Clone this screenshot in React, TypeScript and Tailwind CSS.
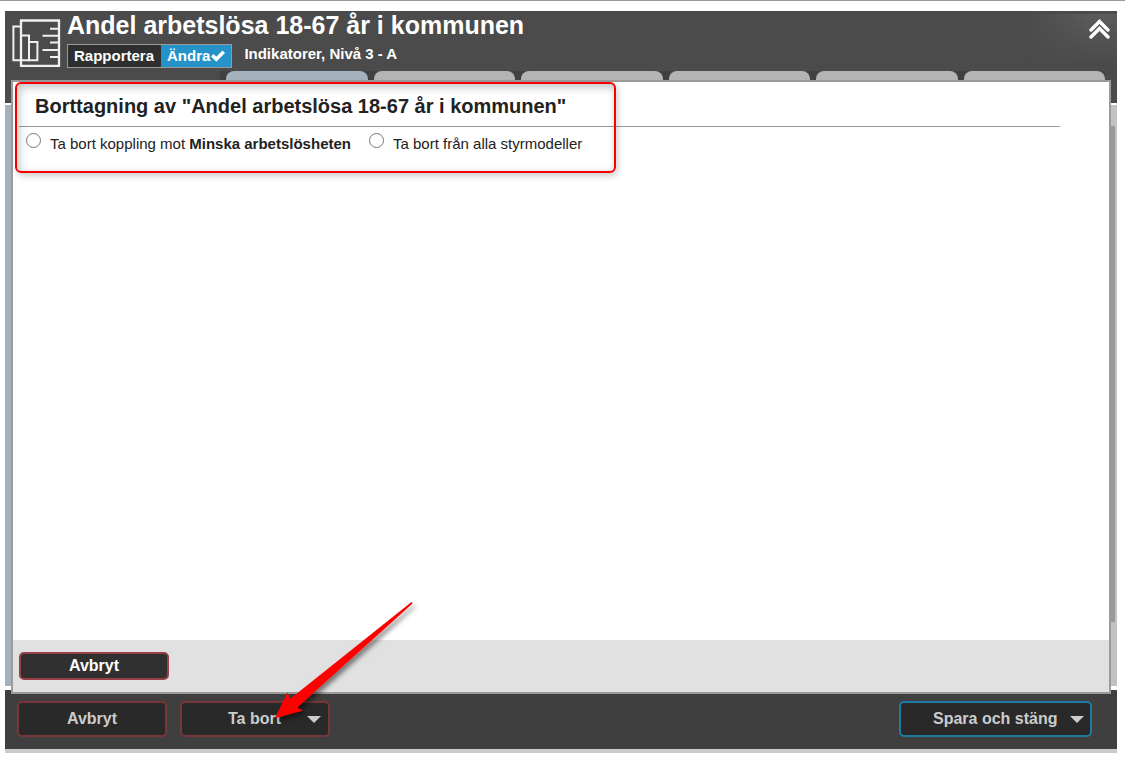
import { useState } from "react";

const tabs = [
  { id: "tab-1", active: true },
  { id: "tab-2", active: false },
  { id: "tab-3", active: false },
  { id: "tab-4", active: false },
  { id: "tab-5", active: false },
  { id: "tab-6", active: false },
];

function IndicatorIcon() {
  return (
    <svg width="49" height="49" viewBox="0 0 49 49" fill="none" stroke="#f0f0f0" strokeWidth="2" aria-hidden="true">
      <path d="M9 7.5H1.4v33.7H9" />
      <path d="M9 1.5h38v45.3H9z" strokeWidth="2.3" />
      <path d="M9 16.5h8v24.7H9" />
      <path d="M17 22.9h8.4v18.3H17z" />
      <path d="M38 9.7h8.5M30.5 16.7h16M38 23.6h8.5M30.5 31h16M38 38h8.5" />
    </svg>
  );
}

function CheckIcon() {
  return (
    <svg width="14" height="12" viewBox="0 0 14 12" fill="none" stroke="#fff" strokeWidth="3.6" aria-hidden="true">
      <path d="M1.3 5.2l4 4L12.8 1.7" />
    </svg>
  );
}

function DoubleChevronUp() {
  return (
    <svg width="21" height="20" viewBox="0 0 21 20" fill="none" stroke="#fff" strokeWidth="3.4" strokeLinecap="round" aria-hidden="true">
      <path d="M2 11l8.5-8.5L19 11" />
      <path d="M2 18l8.5-8.5L19 18" />
    </svg>
  );
}

function CaretDown() {
  return (
    <svg width="14" height="7" viewBox="0 0 14 7" fill="#ccc" aria-hidden="true">
      <path d="M0 0h14L7 7z" />
    </svg>
  );
}

function PointerArrow() {
  return (
    <svg
      className="pointer-events-none absolute bottom-2 left-[90px] z-20"
      width="155"
      height="135"
      viewBox="270 594 155 135"
      aria-hidden="true"
    >
      <defs>
        <filter id="arrow-shadow" x="-10%" y="-10%" width="130%" height="130%">
          <feDropShadow dx="3" dy="3" stdDeviation="2.5" floodColor="#000" floodOpacity="0.5" />
        </filter>
      </defs>
      <path
        d="M275 718.3L287.5 692.3L290 699L411.5 602L412.5 603.5L297 707.7L303 710.5Z"
        fill="#ff0000"
        filter="url(#arrow-shadow)"
      />
    </svg>
  );
}

function Header() {
  return (
    <header className="flex h-[92px] flex-col bg-[#4b4b4b] text-white">
      <div className="flex h-[60px] shrink-0">
        <div className="pl-[7px] pt-2">
          <IndicatorIcon />
        </div>
        <div className="flex-1 pl-1.5">
          <h1 className="text-[25px] font-bold leading-7">Andel arbetslösa 18-67 år i kommunen</h1>
          <div className="mt-[5px] flex h-6">
            <div className="flex border border-[#999] text-[15px] font-bold">
              <button type="button" className="bg-[#2f2f2f] pl-1.5 pr-[7px]">
                Rapportera
              </button>
              <button type="button" className="flex items-center gap-px bg-[#2593c9] px-1.5">
                Ändra
                <CheckIcon />
              </button>
            </div>
            <p className="pl-3 text-[15px] font-bold leading-5">Indikatorer, Nivå 3 - A</p>
          </div>
        </div>
        <button
          type="button"
          aria-label="Fäll ihop"
          className="mt-[3px] flex h-[52px] w-24 justify-end bg-linear-to-b from-[#5b5b5b] to-[#4a4a4a] mask-l-from-30% pr-[7px] pt-[5px]"
        >
          <DoubleChevronUp />
        </button>
      </div>
      <nav className="ml-[215px] mr-3 grid flex-1 grid-cols-6 gap-1.5 bg-[#404040] pl-1.5">
        {tabs.map((tab) => (
          <div key={tab.id} className={tab.active ? "rounded-t-lg bg-[#a3b2bc]" : "rounded-t-lg bg-[#b4b4b4]"} />
        ))}
      </nav>
    </header>
  );
}

function RemoveDialog({ choice, onChoice }: { choice: string; onChoice: (value: string) => void }) {
  return (
    <section
      role="dialog"
      aria-labelledby="remove-title"
      className="absolute bottom-[59px] left-1.5 right-1.5 top-[69px] z-10 flex flex-col border-2 border-[#9b9b9b] bg-white text-[#222]"
    >
      <div className="flex-1 pl-1.5">
        <h2
          id="remove-title"
          className="mr-[49px] h-[45px] border-b border-[#999] pl-4 pt-2.5 text-[20px] font-bold leading-7"
        >
          Borttagning av "Andel arbetslösa 18-67 år i kommunen"
        </h2>
        <div className="flex pl-[7px] pt-1.5 text-[15px] leading-5">
          <label className="flex w-[343px] gap-[9px]">
            <input
              type="radio"
              name="scope"
              className="size-[15px]"
              checked={choice === "link"}
              onChange={() => onChoice("link")}
            />
            <span className="pt-px">
              Ta bort koppling mot <b>Minska arbetslösheten</b>
            </span>
          </label>
          <label className="flex gap-[9px]">
            <input
              type="radio"
              name="scope"
              className="size-[15px]"
              checked={choice === "all"}
              onChange={() => onChoice("all")}
            />
            <span className="pt-px">Ta bort från alla styrmodeller</span>
          </label>
        </div>
      </div>
      <div className="h-[52px] bg-[#e1e1e1] pl-1.5 pt-3">
        <button
          type="button"
          className="h-7 w-[150px] rounded-[5px] border-2 border-[#964147] bg-[#303030] text-[16px] font-bold leading-5 text-white"
        >
          Avbryt
        </button>
      </div>
      {/* highlight around the choices */}
      <div className="pointer-events-none absolute left-0.5 top-0 h-[91px] w-[601px] rounded-md border-2 border-[#f40000] shadow-[2px_3px_6px_rgba(0,0,0,0.2),inset_2px_3px_8px_rgba(0,0,0,0.25)]" />
    </section>
  );
}

function Footer() {
  return (
    <footer className="flex h-[63px] items-start border-b-4 border-[#cacaca] bg-[#3f3f3f] pl-3 pr-[25px] pt-[11px] text-[16px] font-bold text-[#ccc]">
      <button type="button" className="h-9 w-[150px] rounded-[5px] border-2 border-[#7a3539] bg-[#292929]">
        Avbryt
      </button>
      <div className="relative ml-[13px]">
        <button
          type="button"
          className="flex h-9 w-[150px] items-center justify-between rounded-[5px] border-2 border-[#7a3539] bg-[#292929] pl-[46px] pr-[7px]"
        >
          Ta bort
          <CaretDown />
        </button>
        <PointerArrow />
      </div>
      <button
        type="button"
        className="ml-auto flex h-9 w-[193px] items-center justify-between rounded-[5px] border-2 border-[#1f7ba5] bg-[#292929] pl-8 pr-1.5"
      >
        Spara och stäng
        <CaretDown />
      </button>
    </footer>
  );
}

export default function App() {
  const [choice, setChoice] = useState("");

  return (
    <div className="flex min-h-screen flex-col border-t border-[#999] bg-white pb-1 pl-[5px] pr-2 pt-2.5 font-['Liberation_Sans',Arial,sans-serif]">
      <main className="relative flex flex-1 flex-col">
        <Header />
        <div className="mb-1 mt-0.5 flex flex-1 justify-end bg-[#a3b2bc]">
          <div className="w-3 bg-[#c2c2c2] pb-16 pr-0.5 pt-[21px]">
            <div className="h-full bg-[#999]" />
          </div>
        </div>
        <Footer />
        <RemoveDialog choice={choice} onChoice={setChoice} />
      </main>
    </div>
  );
}
